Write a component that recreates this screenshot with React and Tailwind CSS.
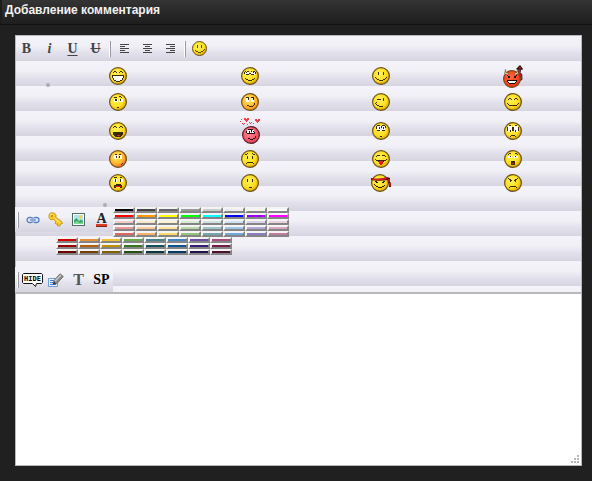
import React from 'react';

const BAND = 'bg-[linear-gradient(#f4f3f9,#f1f0f6_40%,#e3e2ec_65%,#d5d4e0)] bg-[length:100%_25px]';

const SWATCHES_TOP = [
  ['#000000', '#444444', '#666666', '#999999', '#cccccc', '#eeeeee', '#f3f3f3', '#ffffff'],
  ['#ff0000', '#ff9900', '#ffff00', '#00ff00', '#00ffff', '#0000ff', '#9900ff', '#ff00ff'],
  ['#f4cccc', '#fce5cd', '#fff2cc', '#d9ead3', '#d0e0e3', '#cfe2f3', '#d9d2e9', '#ead1dc'],
  ['#ea9999', '#f9cb9c', '#ffe599', '#b6d7a8', '#a2c4c9', '#9fc5e8', '#b4a7d6', '#d5a6bd'],
  ['#e06666', '#f6b26b', '#ffd966', '#93c47d', '#76a5af', '#6fa8dc', '#8e7cc3', '#c27ba0'],
];

const SWATCHES_BOTTOM = [
  ['#cc0000', '#e69138', '#f1c232', '#6aa84f', '#45818e', '#3d85c6', '#674ea7', '#a64d79'],
  ['#990000', '#b45f06', '#bf9000', '#38761d', '#134f5c', '#0b5394', '#351c75', '#741b47'],
  ['#660000', '#783f04', '#7f6000', '#274e13', '#0c343d', '#073763', '#20124d', '#4c1130'],
];

// dark / white / red are pixel layers on an 18x18 face
const FACES = {
  grin: {
    white: 'M3 8h12v3h-1v2h-2v1H6v-1H4v-2H3z',
    dark: 'M5 4.5h2M4 5.5h1M7 5.5h1M11 4.5h2M10 5.5h1M13 5.5h1M3 8.5h12M3 9.5h1M14 9.5h1M3 10.5h1M14 10.5h1M4 11.5h1M13 11.5h1M4 12.5h1M13 12.5h1M5 13.5h2M11 13.5h2M7 14.5h4',
  },
  dreamy: {
    white: 'M4 5h4v3H4zM10 5h4v3h-4z',
    dark: 'M4 4.5h1M6 4.5h2M10 4.5h1M12 4.5h2M3 5.5h1M3 6.5h1M5 5.5h1M12 5.5h1M8 6.5h2M14 5.5h1M14 6.5h1M5 7.5h3M10 7.5h3M4 11.5h1M5 12.5h2M7 13.5h4M11 12.5h2M13 11.5h1',
  },
  smile: {
    dark: 'M6 5.5h1M6 6.5h1M6 7.5h1M11 5.5h1M11 6.5h1M11 7.5h1M3 10.5h1M4 11.5h1M5 12.5h2M7 13.5h4M11 12.5h2M13 11.5h1M14 10.5h1',
  },
  puzzled: {
    white: 'M5 6h4v3H5zM10 6h4v3h-4z',
    dark: 'M5 4.5h3M10 3.5h2M12 4.5h1M6 6.5h2M6 7.5h2M11 6.5h1M11 7.5h1M8 14.5h2',
  },
  tease: {
    tint: '#f9861c',
    white: 'M5 5h3v4H5zM10 5h3v4h-3z',
    dark: 'M5 4.5h3M10 4.5h3M7 5.5h1M7 6.5h1M12 5.5h1M12 6.5h1M6 12.5h2M8 13.5h4M12 12.5h1M13 11.5h1M13 10.5h1',
  },
  wink: {
    dark: 'M5 6.5h4M11 5.5h1M11 6.5h1M11 7.5h1M3 10.5h1M4 11.5h1M5 12.5h2M7 13.5h4M4 9.5h1',
  },
  content: {
    dark: 'M5 5.5h2M4 6.5h1M7 6.5h1M11 5.5h2M10 6.5h1M13 6.5h1M3 10.5h1M14 10.5h1M4 11.5h1M13 11.5h1M5 12.5h8',
  },
  laugh: {
    dark: 'M5 4.5h2M4 5.5h1M7 5.5h1M11 4.5h2M10 5.5h1M13 5.5h1M4 10.5h10M4 11.5h10M4 12.5h10M5 13.5h8M6 14.5h6',
    red: 'M8 13h3v1H8z',
  },
  shy: {
    white: 'M5 4h4v5H5zM10 4h3v5h-3z',
    dark: 'M5 3.5h3M10 3.5h3M4 4.5h1M4 5.5h1M4 6.5h1M9 4.5h1M9 5.5h1M13 4.5h1M13 5.5h1M7 5.5h1M7 6.5h1M11 5.5h1M11 6.5h1M5 8.5h3M10 8.5h3M8 14.5h2',
  },
  sorry: {
    white: 'M4 4h4v6H4zM10 4h4v6h-4z',
    dark: 'M5 3.5h2M11 3.5h2M3 5.5h1M3 6.5h1M3 7.5h1M3 8.5h1M8 5.5h2M8 6.5h2M8 7.5h2M8 8.5h2M14 5.5h1M14 6.5h1M14 7.5h1M14 8.5h1M6 8.5h1M6 9.5h1M11 8.5h1M11 9.5h1M7 13.5h4M6 14.5h1M11 14.5h1',
  },
  blush: {
    tint: '#f7552f',
    white: 'M5 5h4v4H5zM10 5h3v4h-3z',
    dark: 'M6 4.5h2M10 4.5h2M7 6.5h1M7 7.5h1M10 6.5h1M10 7.5h1M12 14.5h1M13 13.5h1',
  },
  sad: {
    dark: 'M4 4.5h2M6 3.5h1M11 3.5h1M12 4.5h2M6 6.5h1M6 7.5h1M6 8.5h1M11 6.5h1M11 7.5h1M11 8.5h1M5 13.5h1M6 12.5h6M12 13.5h1',
  },
  tongue: {
    dark: 'M5 5.5h3M4 6.5h1M10 5.5h3M13 6.5h1M3 9.5h1M4 10.5h10M14 9.5h1M6 11.5h1M11 11.5h1',
    red: 'M7 11h4v3h-1v1H8v-1H7z',
  },
  gasp: {
    white: 'M4 6h4v2H4zM10 6h4v2h-4z',
    dark: 'M4 4.5h1M5 3.5h2M11 3.5h2M13 4.5h1M6 6.5h1M11 6.5h1M7 11.5h4M7 12.5h4M7 13.5h4M7 14.5h4',
    red: 'M8 13h2v1H8z',
  },
  scared: {
    white: 'M4 5h4v3H4zM10 5h4v3h-4z',
    dark: 'M5 3.5h3M11 3.5h2M6 5.5h1M6 6.5h1M6 7.5h1M11 5.5h1M11 6.5h1M11 7.5h1M7 10.5h5M5 11.5h8M5 12.5h8M5 13.5h2M11 13.5h2',
    red: 'M6 12h6v1H6z',
  },
  neutral: {
    dark: 'M6 5.5h1M6 6.5h1M6 7.5h1M11 5.5h1M11 6.5h1M11 7.5h1M8 13.5h3',
  },
  angry: {
    dark: 'M4 4.5h1M5 5.5h2M7 6.5h1M10 6.5h1M11 5.5h2M13 4.5h1M6 6.5h1M6 7.5h1M11 6.5h1M11 7.5h1M5 13.5h1M6 12.5h6M12 13.5h1',
  },
};

const Ball = ({ id, cx = 9, cy = 9, from = '#fff25a', mid = '#fcdd1c', to = '#d39b0a', rim = '#6b5118' }) => (
  <>
    <radialGradient id={id} cx="42%" cy="38%" r="65%">
      <stop offset="0" stopColor={from} />
      <stop offset="0.65" stopColor={mid} />
      <stop offset="1" stopColor={to} />
    </radialGradient>
    <circle cx={cx} cy={cy} r="8.4" fill={`url(#${id})`} stroke={rim} strokeWidth="1.2" />
  </>
);

const Face = ({ name, className = 'size-[18px]', id = name }) => {
  const face = FACES[name];
  return (
    <svg viewBox="0 0 18 18" className={className} aria-hidden="true">
      <Ball id={id} mid={face.tint ? '#ffb32a' : undefined} to={face.tint} />
      {face.white && <path d={face.white} fill="#fff" shapeRendering="crispEdges" />}
      <path d={face.dark} stroke="#3a2a08" shapeRendering="crispEdges" />
      {face.red && <path d={face.red} fill="#e01b24" shapeRendering="crispEdges" />}
    </svg>
  );
};

const Devil = () => (
  <svg viewBox="0 0 20 23" className="h-[23px] w-5" aria-hidden="true">
    <path d="M15 16l3-2v-4l-2-2 1-4" fill="none" stroke="#111" strokeWidth="2.6" />
    <path d="M15 16l3-2v-4l-2-2 1-4" fill="none" stroke="#e0182a" strokeWidth="1.5" />
    <path d="M13 4l4-4 3 4-1 1-2-1-2 1z" fill="#111" />
    <path d="M15 3.5l2-2 1.5 2z" fill="#e01b24" />
    <Ball id="devil" cy={14} from="#ff6a3a" mid="#f8431d" to="#d0320f" rim="#7a4a20" />
    <path
      d="M2.5 4.5l.5 3 3 1-1.5 1.5-3-1.5zM14.5 4.5l-.5 3-3 1 1.5 1.5 3-1.5z"
      fill="#f6e6a8"
      stroke="#4a3010"
      strokeWidth="0.5"
    />
    <path d="M4 10.5h1M5 11.5h2M6 12.5h1M5 12.5h1M11 12.5h2M11 11.5h2M13 10.5h1M4 15.5h10M4 16.5h1M13 16.5h1M5 17.5h1M12 17.5h1M6 18.5h6" stroke="#1a0800" shapeRendering="crispEdges" />
    <path d="M5 16h8v1h-1v1H6v-1H5z" fill="#fff" shapeRendering="crispEdges" />
  </svg>
);

const InLove = () => (
  <svg viewBox="0 0 20 26" className="h-[26px] w-5" aria-hidden="true">
    <Ball id="inlove" cx={11} cy={17} from="#ff8c96" mid="#f0596b" to="#d03e52" rim="#5c2028" />
    <path
      d="M4 0h2v1h1V0h2v2H8v1H7v1H6V3H5V2H4zM15 1h2v1h1V1h2v2h-1v1h-1v1h-1V4h-1V3h-1zM2 5h1v1h1V5h1v1H4v1H3V6H2zM9 4h1v1h1V4h1v1h-1v1h-1V5H9zM1 1h1v1H1zM0 3h1v1H0zM13 5h1v1h-1zM7 6h1v1H7z"
      fill="#f0404a"
      shapeRendering="crispEdges"
    />
    <path d="M7 12h4v4H7zM12 12h2v4h-2z" fill="#fff" shapeRendering="crispEdges" />
    <path d="M8 11.5h5M6 13.5h1M6 14.5h1M11 12.5h1M11 13.5h1M9 13.5h1M9 14.5h1M13 13.5h1M14 14.5h1M7 15.5h8M8 20.5h2M10 21.5h3M13 20.5h2M15 19.5h1M15 18.5h1" stroke="#2a0a10" shapeRendering="crispEdges" />
  </svg>
);

const Ninja = () => (
  <svg viewBox="0 0 22 18" className="h-[18px] w-[22px]" aria-hidden="true">
    <Ball id="ninja" cx={10} />
    <path d="M1 4c5 1.5 9 1 16-1l3 1v4l1 1v4h-2V9h-1V6C12 7 6 7 1 6z" fill="#4a1005" />
    <path d="M2 5c6 1 10 1 15-1M19 5v3M20 9v3" fill="none" stroke="#e0181c" strokeWidth="1.5" />
    <path d="M5 7.5h2M6 8.5h2M12 8.5h2M13 7.5h2M4 10.5h1M5 11.5h1M6 12.5h2M8 13.5h4M12 12.5h2M14 11.5h1" stroke="#2b1d05" shapeRendering="crispEdges" />
  </svg>
);

const SMILE_ROWS = [
  { height: 'h-[26px]', items: ['grin', 'dreamy', 'smile', 'devil'] },
  { height: 'h-[26px]', items: ['puzzled', 'tease', 'wink', 'content'] },
  { height: 'h-[32px]', items: ['laugh', 'inlove', 'shy', 'sorry'] },
  { height: 'h-6', items: ['blush', 'sad', 'tongue', 'gasp'] },
  { height: 'h-6', items: ['scared', 'neutral', 'ninja', 'angry'] },
];

const Smile = ({ name }) => {
  if (name === 'devil') return <Devil />;
  if (name === 'inlove') return <InLove />;
  if (name === 'ninja') return <Ninja />;
  return <Face name={name} />;
};

const Tool = ({ label, children }) => (
  <button
    type="button"
    aria-label={label}
    className="flex h-[25px] w-[23px] shrink-0 items-center justify-center font-['Liberation_Serif',serif] text-sm font-bold text-[#444]"
  >
    {children}
  </button>
);

const Separator = () => (
  <span className="flex h-[25px] w-1.5 shrink-0 items-center justify-center">
    <span className="h-4 w-0.5 border-r border-[#9a9aa2] bg-white" />
  </span>
);

const Align = ({ d }) => (
  <svg viewBox="0 0 9 9" className="size-[9px]" shapeRendering="crispEdges" aria-hidden="true">
    <path d={d} stroke="#444" />
  </svg>
);

const Swatches = ({ rows }) => (
  <div className="grid w-[176px] grid-cols-8">
    {rows.flat().map((color) => (
      <button
        key={color}
        type="button"
        aria-label={color}
        className="h-1.5 border-2 border-t-[#f4f4f4] border-r-[#858585] border-b-[#858585] border-l-[#f4f4f4]"
        style={{ backgroundColor: color }}
      />
    ))}
  </div>
);

const Dot = () => <span className="block size-1 rounded-full bg-[#acacb4]" />;

const LinkIcon = () => (
  <svg viewBox="0 0 14 8" className="h-2 w-3.5" fill="none" aria-hidden="true">
    <rect x="1" y="1.5" width="6" height="5" rx="2.5" stroke="#5a80c4" strokeWidth="1.3" />
    <rect x="7" y="1.5" width="6" height="5" rx="2.5" stroke="#5a80c4" strokeWidth="1.3" />
    <path d="M4 4h6" stroke="#c9dcf8" strokeWidth="3" />
    <path d="M4 4h6" stroke="#4a74c0" />
  </svg>
);

const KeyIcon = () => (
  <svg viewBox="0 0 15 15" className="size-[15px]" aria-hidden="true">
    <path
      d="M1 2.5L3 .7l3.5.5 1.6 2-.3 2.3 5.5 3.7 1.2 2.3-2 .6-.8 2-2.2-.3.4-2-1.5.4-1.2-1 .5-1.4-2-2.4-3.1.3L1 5.6z"
      fill="#fbd02f"
      stroke="#c98f12"
      strokeWidth="0.9"
    />
    <path d="M2.5 3.2l2-1M7 6.5l4.5 3.7" stroke="#fff1a0" />
    <circle cx="4" cy="4" r="0.9" fill="#a9720c" />
  </svg>
);

const ImageIcon = () => (
  <svg viewBox="0 0 13 13" className="size-[13px]" aria-hidden="true">
    <rect x="0.5" y="0.5" width="12" height="12" fill="#fff" stroke="#4c6f66" />
    <path d="M2 2h9v9H2z" fill="#b7e2f2" />
    <circle cx="8.5" cy="4" r="1.8" fill="#f7d54a" />
    <path d="M2 7l2.5-2L7 8l2-1.5L11 8v3H2z" fill="#3daa66" />
    <path d="M2 9.5l3-1.5 3 2 3-1v2H2z" fill="#7fd693" />
  </svg>
);

const ColorIcon = () => (
  <span className="flex flex-col items-center pt-0.5">
    <span className="text-sm leading-[10px] text-[#222]">A</span>
    <span className="h-[3px] w-[11px] border-b border-[#8d2212] bg-[#d8402a]" />
  </span>
);

const HideIcon = () => (
  <svg viewBox="0 0 21 14" className="h-3.5 w-[21px] shrink-0" aria-hidden="true">
    <path d="M1.5.5h18l1 1v8l-1 1h-5l-1 3-3-3h-9l-1-1v-8z" fill="#fff" stroke="#111" />
    <text x="10.5" y="8" textAnchor="middle" fontSize="7" fill="#000" className="font-['DejaVu_Sans_Mono',monospace] font-bold">
      HIDE
    </text>
  </svg>
);

const PencilIcon = () => (
  <svg viewBox="0 0 16 14" className="h-3.5 w-4" aria-hidden="true">
    <path d="M.5 5.5h9v8h-9z" fill="#e8f1fd" stroke="#6f9fdd" />
    <path d="M2 7.5h4M2 9.5h3M2 11.5h6" stroke="#3f7fd0" />
    <path d="M5 11.5l1-4L12 .8l3.3 2.6L9 10.5z" fill="#8c8c8c" stroke="#606060" strokeWidth="0.8" />
    <path d="M7 8l6-6" stroke="#c8c8c8" strokeWidth="1.5" />
    <path d="M5 11.5l1-3 2 2z" fill="#333" />
  </svg>
);

const Header = () => (
  <header className="h-[25px] border-b border-l-2 border-b-[#111] border-l-[#1c1c1c] bg-gradient-to-b from-[#343434] to-[#1e1e1e] pl-[3px]">
    <h2 className="text-xs leading-5 font-bold text-[#f2f2f2]">
      <label htmlFor="comment">Добавление комментария</label>
    </h2>
  </header>
);

const App = () => (
  <div className="flex min-h-screen flex-col bg-[#202020] font-['Liberation_Sans',Arial,sans-serif]">
    <Header />
    <main className="mt-2.5 mr-2.5 mb-[15px] ml-[15px] flex flex-1 flex-col border border-[#b8b8bc] bg-white">
      <div className={`border-b-2 border-[#b9b9bd] ${BAND}`}>
        <div className="-ml-px flex">
          <Tool label="Полужирный">B</Tool>
          <Tool label="Курсив"><span className="italic">i</span></Tool>
          <Tool label="Подчёркнутый"><span className="underline underline-offset-2">U</span></Tool>
          <Tool label="Зачёркнутый"><span className="line-through">U</span></Tool>
          <Separator />
          <Tool label="По левому краю"><Align d="M0 .5h9M0 2.5h5M0 4.5h9M0 6.5h5M0 8.5h9" /></Tool>
          <Tool label="По центру"><Align d="M0 .5h9M2 2.5h5M0 4.5h9M2 6.5h5M0 8.5h9" /></Tool>
          <Tool label="По правому краю"><Align d="M0 .5h9M4 2.5h5M0 4.5h9M4 6.5h5M0 8.5h9" /></Tool>
          <Separator />
          <Tool label="Смайлики"><Face name="smile" id="toolbar-smile" className="size-[15px]" /></Tool>
        </div>

        <div className="flex pt-0.5">
          <div className="flex w-9 shrink-0 justify-end pt-5 pr-0.5">
            <Dot />
          </div>
          <div className="flex-1 pr-0.5">
            {SMILE_ROWS.map((row) => (
              <div key={row.items[0]} className={`grid grid-cols-4 ${row.height}`}>
                {row.items.map((name) => (
                  <button key={name} type="button" aria-label={name} className="flex items-center justify-center">
                    <Smile name={name} />
                  </button>
                ))}
              </div>
            ))}
          </div>
        </div>

        <div className="flex h-3 items-end pl-[87px]">
          <Dot />
        </div>

        <div className="-ml-px flex items-start">
          <div className={`flex ${BAND}`}>
            <Separator />
            <Tool label="Ссылка"><LinkIcon /></Tool>
            <Tool label="Защищённая ссылка"><KeyIcon /></Tool>
            <Tool label="Картинка"><ImageIcon /></Tool>
            <Tool label="Цвет текста"><ColorIcon /></Tool>
          </div>
          <Swatches rows={SWATCHES_TOP} />
        </div>
        <div className="pb-3 pl-10">
          <Swatches rows={SWATCHES_BOTTOM} />
        </div>

        <div className="-ml-px flex">
          <div className={`flex ${BAND}`}>
            <Separator />
            <Tool label="Скрытый текст"><HideIcon /></Tool>
            <Tool label="Цитата"><PencilIcon /></Tool>
            <Tool label="Транслит"><span className="text-base text-[#555]">T</span></Tool>
            <Tool label="Спойлер"><span className="text-black">SP</span></Tool>
          </div>
        </div>
      </div>

      <div className="relative flex flex-1">
        <textarea id="comment" className="min-h-[120px] w-full resize-none bg-white p-1 text-xs outline-none" />
        <svg viewBox="0 0 8 8" className="absolute right-0.5 bottom-0.5 size-2" aria-hidden="true">
          <path d="M6 0h2v2H6zM3 3h2v2H3zM6 3h2v2H6zM0 6h2v2H0zM3 6h2v2H3zM6 6h2v2H6z" fill="#b8b8b8" />
        </svg>
      </div>
    </main>
  </div>
);

export default App;
